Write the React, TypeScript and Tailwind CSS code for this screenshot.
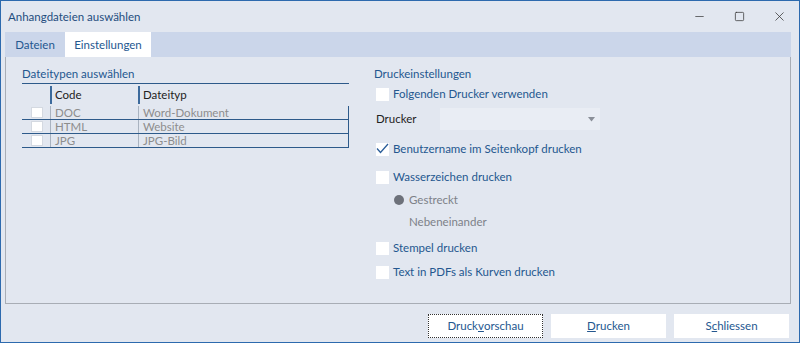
import { Minus, Square, X } from 'lucide-react'

const files = [
  { code: 'DOC', type: 'Word-Dokument' },
  { code: 'HTML', type: 'Website' },
  { code: 'JPG', type: 'JPG-Bild' },
]

function Box ({ checked = false, size = 'w-[13px] h-[13px]' }: { checked?: boolean, size?: string }): JSX.Element {
  return (
    <span className={`${size} bg-white flex items-center justify-center shrink-0`}>
      {checked && (
        <svg width="13" height="11" viewBox="0 0 13 11" className="-mt-[1px]">
          <path d="M1 5.5 L4.5 9.5 L12 1" fill="none" stroke="#2a5d99" strokeWidth="1.3" />
        </svg>
      )}
    </span>
  )
}

function Option ({ label, checked = false }: { label: string, checked?: boolean }): JSX.Element {
  return (
    <div className="flex items-center h-[14px] gap-[4px]">
      <Box checked={checked} />
      <span className="text-[#24578f]">{label}</span>
    </div>
  )
}

function Button ({ children, focus = false }: { children: React.ReactNode, focus?: boolean }): JSX.Element {
  return (
    <div className={`w-[115px] h-[24px] bg-white flex items-center justify-center text-[#24578f] ${focus ? 'border border-dotted border-[#333]' : ''}`}>
      {children}
    </div>
  )
}

export default function App (): JSX.Element {
  return (
    <div
      className="w-[800px] h-[343px] bg-[#e2e7f0] border border-[#2d6aae] flex flex-col text-[11.5px] leading-[14px] overflow-hidden"
      style={{ fontFamily: 'Lato, "Noto Sans", sans-serif' }}
    >
      {/* title bar */}
      <div className="h-[31px] flex items-center pl-[7px] shrink-0">
        <span className="text-[#1f4d7e] flex-1">Anhangdateien auswählen</span>
        <div className="flex items-center text-[#333]">
          <span className="w-[40px] flex justify-center"><Minus size={13} strokeWidth={1.3} /></span>
          <span className="w-[40px] flex justify-center"><Square size={11} strokeWidth={1.6} /></span>
          <span className="w-[40px] flex justify-center"><X size={15} strokeWidth={1.2} /></span>
        </div>
      </div>

      {/* tabs */}
      <div className="mx-[4px] mr-[8px] h-[25px] bg-[#cbd6ea] flex shrink-0">
        <div className="w-[60px] flex items-center justify-center text-[#24578f]">Dateien</div>
        <div className="w-[86px] bg-white flex items-center justify-center text-[#24578f]">Einstellungen</div>
      </div>

      {/* panel */}
      <div className="mx-[4px] mr-[8px] h-[247px] border-l border-r border-b border-[#a8adb5] flex pl-[16px] pt-[9px]">
        <div className="w-[327px]">
          <div className="text-[#24578f] leading-[16px]">Dateitypen auswählen</div>
          <div className="border-b border-[#2d5a8a] mt-[1px]" />
          <div className="flex h-[18px] mt-[2px] text-[#222] items-center">
            <span className="w-[28px]" />
            <span className="w-[88px] h-full border-l-2 border-[#3c6a9c] pl-[3px] flex items-center">Code</span>
            <span className="h-full border-l-2 border-[#3c6a9c] pl-[3px] flex items-center">Dateityp</span>
          </div>
          <div className="border-r border-[#2d5a8a] mt-[2px]">
            {files.map((f) => (
              <div key={f.code} className="flex h-[14px] items-center text-[#8d8d8d] border-b border-[#2d5a8a]">
                <span className="w-[28px] flex justify-center pl-[1px]"><Box size="w-[12px] h-[11px] border border-[#d4d9e1]" /></span>
                <span className="w-[88px] h-full border-l border-[#a9b3c0] pl-[4px] flex items-center">{f.code}</span>
                <span className="h-full border-l border-[#a9b3c0] pl-[4px] flex items-center">{f.type}</span>
              </div>
            ))}
          </div>
        </div>

        <div className="ml-[25px] flex flex-col">
          <div className="text-[#24578f] leading-[16px]">Druckeinstellungen</div>
          <div className="mt-[5px] ml-[2px]"><Option label="Folgenden Drucker verwenden" /></div>
          <div className="flex items-center mt-[7px] ml-[2px]">
            <span className="w-[64px] text-[#222]">Drucker</span>
            <div className="w-[160px] h-[22px] bg-[#e9edf4] flex justify-end items-center pr-[5px]">
              <svg width="7" height="5" viewBox="0 0 7 5"><path d="M0 0 H7 L3.5 4.5 Z" fill="#8a8f98" /></svg>
            </div>
          </div>
          <div className="mt-[12px] ml-[2px]"><Option label="Benutzername im Seitenkopf drucken" checked /></div>
          <div className="mt-[14px] ml-[2px]"><Option label="Wasserzeichen drucken" /></div>
          <div className="mt-[9px] ml-[20px] flex items-center gap-[5px] text-[#7d8188] h-[14px]">
            <span className="w-[10px] h-[10px] rounded-full bg-[#6d717a]" />
            <span>Gestreckt</span>
          </div>
          <div className="mt-[8px] ml-[35px] text-[#7d8188] h-[14px] flex items-center">Nebeneinander</div>
          <div className="mt-[12px] ml-[2px]"><Option label="Stempel drucken" /></div>
          <div className="mt-[10px] ml-[2px]"><Option label="Text in PDFs als Kurven drucken" /></div>
        </div>
      </div>

      {/* buttons */}
      <div className="flex justify-end gap-[8px] mt-[10px] pr-[10px]">
        <Button focus>Druck<u>v</u>orschau</Button>
        <Button><u>D</u>rucken</Button>
        <Button>S<u>c</u>hliessen</Button>
      </div>
    </div>
  )
}
